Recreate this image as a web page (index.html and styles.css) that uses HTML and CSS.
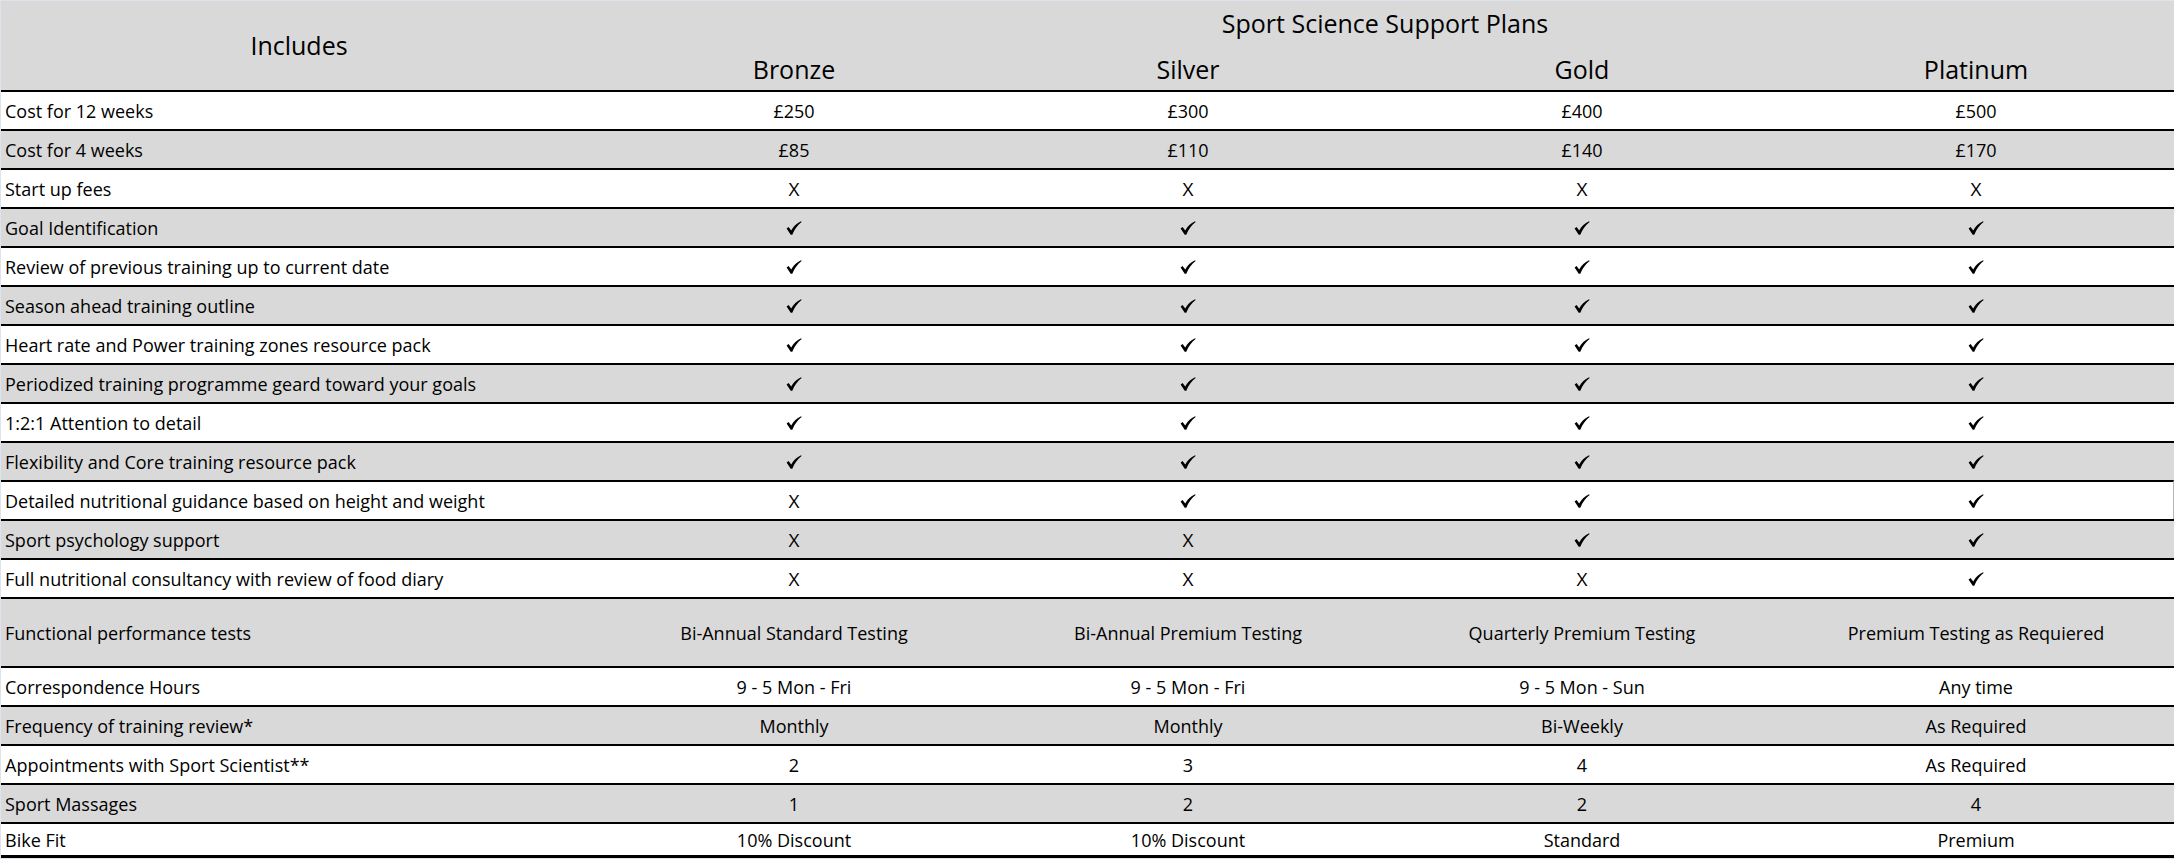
FILE: index.html
```html
<!DOCTYPE html>
<html lang="en">
<head>
<meta charset="utf-8">
<title>Sport Science Support Plans</title>
<link rel="stylesheet" href="styles.css">
</head>
<body>
<svg width="0" height="0" class="defs" aria-hidden="true">
  <defs>
    <symbol id="tick" viewBox="0 0 16 14">
      <path d="M0.6 7.6 L2.6 6.1 L5.2 9.4 C7.6 5.4 10.6 2.4 15.1 0.3 L15.6 1.0 C11.6 4.1 8.6 8.1 6.3 13.7 L4.7 13.7 Z"/>
    </symbol>
  </defs>
</svg>
<div class="sheet">
  <div class="head">
    <div class="inc">Includes</div>
    <div class="plans">Sport Science Support Plans</div>
    <div class="tier">Bronze</div>
    <div class="tier">Silver</div>
    <div class="tier">Gold</div>
    <div class="tier">Platinum</div>
  </div>

  <div class="row white"><div class="lbl">Cost for 12 weeks</div><div class="c">£250</div><div class="c">£300</div><div class="c">£400</div><div class="c">£500</div></div>
  <div class="row grey"><div class="lbl">Cost for 4 weeks</div><div class="c">£85</div><div class="c">£110</div><div class="c">£140</div><div class="c">£170</div></div>
  <div class="row white"><div class="lbl">Start up fees</div><div class="c x">X</div><div class="c x">X</div><div class="c x">X</div><div class="c x">X</div></div>
  <div class="row grey"><div class="lbl">Goal Identification</div><div class="c"><svg class="ck"><use href="#tick"/></svg></div><div class="c"><svg class="ck"><use href="#tick"/></svg></div><div class="c"><svg class="ck"><use href="#tick"/></svg></div><div class="c"><svg class="ck"><use href="#tick"/></svg></div></div>
  <div class="row white"><div class="lbl">Review of previous training up to current date</div><div class="c"><svg class="ck"><use href="#tick"/></svg></div><div class="c"><svg class="ck"><use href="#tick"/></svg></div><div class="c"><svg class="ck"><use href="#tick"/></svg></div><div class="c"><svg class="ck"><use href="#tick"/></svg></div></div>
  <div class="row grey"><div class="lbl">Season ahead training outline</div><div class="c"><svg class="ck"><use href="#tick"/></svg></div><div class="c"><svg class="ck"><use href="#tick"/></svg></div><div class="c"><svg class="ck"><use href="#tick"/></svg></div><div class="c"><svg class="ck"><use href="#tick"/></svg></div></div>
  <div class="row white"><div class="lbl">Heart rate and Power training zones resource pack</div><div class="c"><svg class="ck"><use href="#tick"/></svg></div><div class="c"><svg class="ck"><use href="#tick"/></svg></div><div class="c"><svg class="ck"><use href="#tick"/></svg></div><div class="c"><svg class="ck"><use href="#tick"/></svg></div></div>
  <div class="row grey"><div class="lbl">Periodized training programme geard toward your goals</div><div class="c"><svg class="ck"><use href="#tick"/></svg></div><div class="c"><svg class="ck"><use href="#tick"/></svg></div><div class="c"><svg class="ck"><use href="#tick"/></svg></div><div class="c"><svg class="ck"><use href="#tick"/></svg></div></div>
  <div class="row white"><div class="lbl">1:2:1 Attention to detail</div><div class="c"><svg class="ck"><use href="#tick"/></svg></div><div class="c"><svg class="ck"><use href="#tick"/></svg></div><div class="c"><svg class="ck"><use href="#tick"/></svg></div><div class="c"><svg class="ck"><use href="#tick"/></svg></div></div>
  <div class="row grey"><div class="lbl">Flexibility and Core training resource pack</div><div class="c"><svg class="ck"><use href="#tick"/></svg></div><div class="c"><svg class="ck"><use href="#tick"/></svg></div><div class="c"><svg class="ck"><use href="#tick"/></svg></div><div class="c"><svg class="ck"><use href="#tick"/></svg></div></div>
  <div class="row white edge"><div class="lbl">Detailed nutritional guidance based on height and weight</div><div class="c x">X</div><div class="c"><svg class="ck"><use href="#tick"/></svg></div><div class="c"><svg class="ck"><use href="#tick"/></svg></div><div class="c"><svg class="ck"><use href="#tick"/></svg></div></div>
  <div class="row grey"><div class="lbl">Sport psychology support</div><div class="c x">X</div><div class="c x">X</div><div class="c"><svg class="ck"><use href="#tick"/></svg></div><div class="c"><svg class="ck"><use href="#tick"/></svg></div></div>
  <div class="row white"><div class="lbl">Full nutritional consultancy with review of food diary</div><div class="c x">X</div><div class="c x">X</div><div class="c x">X</div><div class="c"><svg class="ck"><use href="#tick"/></svg></div></div>
  <div class="row grey tall"><div class="lbl">Functional performance tests</div><div class="c">Bi-Annual Standard Testing</div><div class="c">Bi-Annual Premium Testing</div><div class="c">Quarterly Premium Testing</div><div class="c">Premium Testing as Requiered</div></div>
  <div class="row white"><div class="lbl">Correspondence Hours</div><div class="c">9 - 5 Mon - Fri</div><div class="c">9 - 5 Mon - Fri</div><div class="c">9 - 5 Mon - Sun</div><div class="c">Any time</div></div>
  <div class="row grey"><div class="lbl">Frequency of training review*</div><div class="c">Monthly</div><div class="c">Monthly</div><div class="c">Bi-Weekly</div><div class="c">As Required</div></div>
  <div class="row white"><div class="lbl">Appointments with Sport Scientist**</div><div class="c">2</div><div class="c">3</div><div class="c">4</div><div class="c">As Required</div></div>
  <div class="row grey"><div class="lbl">Sport Massages</div><div class="c">1</div><div class="c">2</div><div class="c">2</div><div class="c">4</div></div>
  <div class="row white last"><div class="lbl">Bike Fit</div><div class="c">10% Discount</div><div class="c">10% Discount</div><div class="c">Standard</div><div class="c">Premium</div></div>
</div>
</body>
</html>
```

FILE: styles.css
```css
* { box-sizing: border-box; }

html, body {
  margin: 0;
  padding: 0;
}

body {
  background: #dfe3ed;
  padding: 1px 0 0 1px;
  font-family: "Open Sans", "Liberation Sans", sans-serif;
  color: #000;
  overflow: hidden;
}

.defs {
  position: absolute;
  width: 0;
  height: 0;
}

.sheet {
  width: 2173px;
  display: flex;
  flex-direction: column;
}

.head {
  display: grid;
  grid-template-columns: 596px repeat(4, 394px);
  grid-template-rows: 45px 44px;
  background: #d9d9d9;
  font-size: 25px;
  height: 89px;
}

.inc {
  grid-row: 1 / 3;
  display: flex;
  align-items: center;
  justify-content: center;
  padding-bottom: 1px;
}

.plans {
  grid-column: 2 / 6;
  display: flex;
  align-items: center;
  justify-content: center;
  padding-bottom: 1px;
}

.tier {
  display: flex;
  align-items: center;
  justify-content: center;
  padding-top: 1px;
}

.row {
  display: grid;
  grid-template-columns: 596px repeat(4, 394px);
  height: 39px;
  border-top: 2px solid #000;
  font-size: 18px;
  align-items: center;
}

.row.white { background: #fff; }
.row.grey { background: #d9d9d9; }
.row.tall { height: 69px; }
.row.last {
  height: 36px;
  border-bottom: 3px solid #000;
}
.row.edge { border-right: 1px solid #b5b5b5; }

.lbl {
  padding-left: 4px;
  white-space: nowrap;
}

.c {
  text-align: center;
  white-space: nowrap;
  display: flex;
  justify-content: center;
  align-items: center;
}

.x {
  font-size: 19px;
}

.ck {
  width: 16px;
  height: 14px;
  fill: #000;
}
```
